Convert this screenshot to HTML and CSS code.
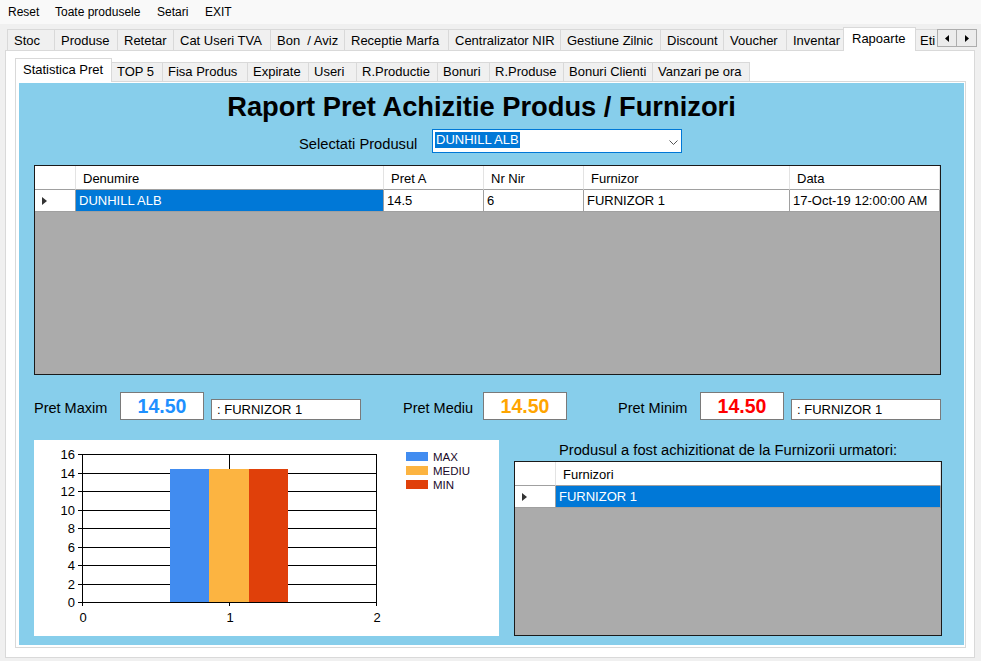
FILE: index.html
```html
<!DOCTYPE html>
<html>
<head>
<meta charset="utf-8">
<title>Rapoarte</title>
<link rel="stylesheet" href="styles.css">
</head>
<body>
<div class="menubar">
  <span class="mi mi-reset">Reset</span>
  <span class="mi mi-toate">Toate produsele</span>
  <span class="mi mi-setari">Setari</span>
  <span class="mi">EXIT</span>
</div>

<div class="tabrow outer-row">
  <div class="tablist outer-list">
    <div class="tab">Stoc</div>
    <div class="tab">Produse</div>
    <div class="tab">Retetar</div>
    <div class="tab">Cat Useri TVA</div>
    <div class="tab">Bon&nbsp; / Aviz</div>
    <div class="tab">Receptie Marfa</div>
    <div class="tab">Centralizator NIR</div>
    <div class="tab">Gestiune Zilnic</div>
    <div class="tab">Discount</div>
    <div class="tab">Voucher</div>
    <div class="tab">Inventar</div>
    <div class="tab sel">Rapoarte</div>
    <div class="tab">Eti</div>
  </div>
  <div class="scrollbtns">
    <div class="sbtn"><svg width="4" height="7" viewBox="0 0 4 7"><path d="M4 0L0 3.5L4 7Z" fill="#000"/></svg></div>
    <div class="sbtn"><svg width="4" height="7" viewBox="0 0 4 7"><path d="M0 0L4 3.5L0 7Z" fill="#000"/></svg></div>
  </div>
</div>

<div class="outer-page">
  <div class="tabrow inner-row">
    <div class="tablist inner-list">
      <div class="tab sel">Statistica Pret</div>
      <div class="tab">TOP 5</div>
      <div class="tab">Fisa Produs</div>
      <div class="tab">Expirate</div>
      <div class="tab">Useri</div>
      <div class="tab">R.Productie</div>
      <div class="tab">Bonuri</div>
      <div class="tab">R.Produse</div>
      <div class="tab">Bonuri Clienti</div>
      <div class="tab">Vanzari pe ora</div>
    </div>
  </div>

  <div class="inner-page">
    <div class="panel">
      <h1 class="title">Raport Pret Achizitie Produs / Furnizori</h1>

      <div class="select-row">
        <span class="select-label">Selectati Produsul</span>
        <div class="combo">
          <span class="combo-text">DUNHILL ALB</span>
          <svg class="chev" width="9" height="5" viewBox="0 0 9 5"><polyline points="0.5,0.5 4.5,4.5 8.5,0.5" fill="none" stroke="#555" stroke-width="1"/></svg>
        </div>
      </div>

      <div class="grid grid-main">
        <div class="grow ghead">
          <div class="gc"></div>
          <div class="gc">Denumire</div>
          <div class="gc">Pret A</div>
          <div class="gc">Nr Nir</div>
          <div class="gc">Furnizor</div>
          <div class="gc">Data</div>
        </div>
        <div class="grow gdata">
          <div class="gc rowhead"><svg width="5" height="8" viewBox="0 0 5 8"><path d="M0 0L5 4L0 8Z" fill="#333"/></svg></div>
          <div class="gc selcell">DUNHILL ALB</div>
          <div class="gc">14.5</div>
          <div class="gc">6</div>
          <div class="gc">FURNIZOR 1</div>
          <div class="gc">17-Oct-19 12:00:00 AM</div>
        </div>
      </div>

      <div class="stats">
        <span class="slabel sl1">Pret Maxim</span>
        <div class="sbox sb-max">14.50</div>
        <div class="stb">: FURNIZOR 1</div>
        <span class="slabel sl2">Pret Mediu</span>
        <div class="sbox sb-med">14.50</div>
        <span class="slabel sl3">Pret Minim</span>
        <div class="sbox sb-min">14.50</div>
        <div class="stb">: FURNIZOR 1</div>
      </div>

      <div class="bottom">
        <div class="chart">
          <svg width="465" height="196" viewBox="0 0 465 196" shape-rendering="crispEdges">
            <g stroke="#000" stroke-width="1">
              <line x1="44" y1="162.5" x2="342.5" y2="162.5"/>
              <line x1="44" y1="144.5" x2="342.5" y2="144.5"/>
              <line x1="44" y1="125.5" x2="342.5" y2="125.5"/>
              <line x1="44" y1="107.5" x2="342.5" y2="107.5"/>
              <line x1="44" y1="88.5" x2="342.5" y2="88.5"/>
              <line x1="44" y1="70.5" x2="342.5" y2="70.5"/>
              <line x1="44" y1="51.5" x2="342.5" y2="51.5"/>
              <line x1="44" y1="33.5" x2="342.5" y2="33.5"/>
              <line x1="44" y1="14.5" x2="342.5" y2="14.5"/>
              <line x1="48.5" y1="14.5" x2="48.5" y2="166"/>
              <line x1="195.5" y1="14.5" x2="195.5" y2="166"/>
              <line x1="342.5" y1="14.5" x2="342.5" y2="166"/>
            </g>
            <rect x="136" y="28.5" width="39" height="133.5" fill="#418cf0"/>
            <rect x="175" y="28.5" width="40" height="133.5" fill="#fcb441"/>
            <rect x="215" y="28.5" width="39" height="133.5" fill="#e0400a"/>
            <g class="axis-text" text-anchor="end">
              <text x="41" y="167">0</text>
              <text x="41" y="149">2</text>
              <text x="41" y="130">4</text>
              <text x="41" y="112">6</text>
              <text x="41" y="93">8</text>
              <text x="41" y="75">10</text>
              <text x="41" y="56">12</text>
              <text x="41" y="38">14</text>
              <text x="41" y="19">16</text>
            </g>
            <g class="axis-text" text-anchor="middle">
              <text x="49" y="182">0</text>
              <text x="196" y="182">1</text>
              <text x="343" y="182">2</text>
            </g>
            <rect x="372" y="12" width="22" height="9" fill="#418cf0"/>
            <rect x="372" y="26" width="22" height="9" fill="#fcb441"/>
            <rect x="372" y="40" width="22" height="9" fill="#e0400a"/>
            <g class="legend-text">
              <text x="399" y="21">MAX</text>
              <text x="399" y="35">MEDIU</text>
              <text x="399" y="49">MIN</text>
            </g>
          </svg>
        </div>

        <div class="suppliers">
          <div class="sup-label">Produsul a fost achizitionat de la Furnizorii urmatori:</div>
          <div class="grid grid-sup">
            <div class="grow ghead">
              <div class="gc"></div>
              <div class="gc">Furnizori</div>
            </div>
            <div class="grow gdata">
              <div class="gc rowhead"><svg width="5" height="8" viewBox="0 0 5 8"><path d="M0 0L5 4L0 8Z" fill="#333"/></svg></div>
              <div class="gc selcell">FURNIZOR 1</div>
            </div>
          </div>
        </div>
      </div>
    </div>
  </div>
</div>
</body>
</html>
```

FILE: styles.css
```css
* { box-sizing: border-box; }
html, body { margin: 0; padding: 0; }
body {
  width: 981px;
  height: 661px;
  overflow: hidden;
  background: #f0f0f0;
  font-family: "Liberation Sans", Arial, sans-serif;
  font-size: 13px;
  color: #000;
}

/* menu */
.menubar {
  height: 24px;
  background: #f9f9f9;
  display: flex;
  padding-left: 8px;
  font-size: 12px;
  line-height: 24px;
}
.mi-reset { width: 47px; }
.mi-toate { width: 102px; }
.mi-setari { width: 48px; }

/* tabs */
.tabrow {
  display: flex;
  align-items: flex-end;
  height: 24px;
  position: relative;
  z-index: 1;
  margin-bottom: -1px;
}
.outer-row { margin-top: 3px; padding-left: 7px; margin-right: 4px; }
.tablist { display: flex; align-items: flex-end; height: 24px; overflow: hidden; }
.outer-list { width: 930px; flex: none; }
.tab {
  flex: none;
  border: 1px solid #d9d9d9;
  border-right: 0;
  border-bottom: 0;
  background: #f0f0f0;
  white-space: nowrap;
  overflow: hidden;
}
.tab.sel { background: #fff; border-right: 1px solid #d9d9d9; }
.tab.sel + .tab { border-left: 0; }
.tab:last-child { border-right: 1px solid #d9d9d9; }

.outer-list .tab { height: 21px; margin-bottom: 1px; padding: 2px 0 0 6px; line-height: 18px; }
.outer-list .tab.sel { height: 24px; margin-bottom: 0; padding-left: 8px; }
.outer-list .tab:last-child { border-right: 0; }
.outer-list .tab:nth-child(1) { width: 47px; }
.outer-list .tab:nth-child(2) { width: 63px; }
.outer-list .tab:nth-child(3) { width: 56px; }
.outer-list .tab:nth-child(4) { width: 97px; }
.outer-list .tab:nth-child(5) { width: 74px; }
.outer-list .tab:nth-child(6) { width: 104px; }
.outer-list .tab:nth-child(7) { width: 112px; }
.outer-list .tab:nth-child(8) { width: 100px; }
.outer-list .tab:nth-child(9) { width: 63px; }
.outer-list .tab:nth-child(10) { width: 63px; }
.outer-list .tab:nth-child(11) { width: 57px; }
.outer-list .tab:nth-child(12) { width: 73px; }
.outer-list .tab:nth-child(13) { width: 21px; padding-left: 4px; }

.scrollbtns { display: flex; align-self: flex-start; margin-top: 2px; }
.sbtn {
  width: 20px;
  height: 18px;
  border: 1px solid #adadad;
  background: #ececec;
  display: flex;
  align-items: center;
  justify-content: center;
}
.sbtn + .sbtn { border-left: 0; }

.inner-list .tab { height: 19px; margin-bottom: 1px; padding: 0 0 0 5px; line-height: 17px; }
.inner-list .tab.sel { height: 24px; margin-bottom: 0; padding: 2px 0 0 7px; }
.inner-list .tab:nth-child(1) { width: 97px; }
.inner-list .tab:nth-child(2) { width: 50px; }
.inner-list .tab:nth-child(3) { width: 85px; }
.inner-list .tab:nth-child(4) { width: 61px; }
.inner-list .tab:nth-child(5) { width: 48px; }
.inner-list .tab:nth-child(6) { width: 81px; }
.inner-list .tab:nth-child(7) { width: 52px; }
.inner-list .tab:nth-child(8) { width: 74px; }
.inner-list .tab:nth-child(9) { width: 89px; }
.inner-list .tab:nth-child(10) { width: 98px; }

/* pages */
.outer-page {
  margin: 0 6px 0 5px;
  height: 608px;
  border: 1px solid #d9d9d9;
  background: #fff;
  padding: 7px 8px 9px 9px;
  display: flex;
  flex-direction: column;
}
.inner-page {
  height: 567px;
  border: 1px solid #d9d9d9;
  background: #fff;
  padding: 1px 1px 2px 3px;
}
.panel {
  width: 945px;
  height: 562px;
  background: #87ceeb;
  padding-left: 15px;
  display: flex;
  flex-direction: column;
}

/* title and selector */
.title {
  margin: 8px 0 0;
  font-size: 27.3px;
  font-weight: bold;
  line-height: 31px;
  text-align: center;
  padding-right: 35px;
}
.select-row {
  display: flex;
  align-items: flex-start;
  margin-top: 7px;
  height: 24px;
  padding-left: 265px;
}
.select-label { font-size: 14.7px; line-height: 16px; margin-top: 7px; width: 133px; white-space: nowrap; }
.combo {
  width: 250px;
  height: 24px;
  border: 1px solid #0078d7;
  background: #fff;
  display: flex;
  align-items: flex-start;
  justify-content: space-between;
  padding: 2px 3px 0 2px;
}
.combo-text { background: #0078d7; color: #fff; line-height: 16px; padding: 0 1px; }
.chev { margin-top: 8px; }

/* data grids */
.grid { border: 1px solid #1a1a1a; background: #ababab; }
.grid-main { width: 907px; height: 210px; margin-top: 12px; }
.grid-sup { height: 175px; margin-top: 3px; }
.grow { display: grid; background: #fff; }
.grid-main .grow { grid-template-columns: 41px 308px 100px 100px 206px 150px; }
.grid-sup .grow { grid-template-columns: 41px 385px; }
.gc { white-space: nowrap; overflow: hidden; }
.ghead .gc {
  height: 24px;
  border-right: 1px solid #e3e3e3;
  border-bottom: 1px solid #a0a0a0;
  padding: 2px 0 0 7px;
  line-height: 22px;
}
.gdata .gc {
  height: 22px;
  border-right: 1px solid #a0a0a0;
  border-bottom: 1px solid #a0a0a0;
  padding-left: 3px;
  line-height: 21px;
}
.gdata .rowhead { display: flex; align-items: center; padding-left: 7px; }
.gdata .selcell { background: #0078d7; color: #fff; }

/* stats */
.stats { display: flex; align-items: flex-start; height: 28px; margin-top: 17px; }
.slabel { font-size: 14.5px; line-height: 17px; margin-top: 8px; white-space: nowrap; }
.sl1 { width: 86px; }
.sl2 { width: 80px; margin-left: 42px; }
.sl3 { width: 82px; margin-left: 51px; }
.sbox {
  width: 84px;
  height: 28px;
  border: 1px solid #7a7a7a;
  background: #fff;
  font-weight: bold;
  font-size: 19.5px;
  line-height: 26px;
  text-align: center;
}
.sb-max { color: #1e90ff; }
.sb-med { color: #ffa500; }
.sb-min { color: #ff0000; }
.stb {
  width: 150px;
  height: 21px;
  margin: 7px 0 0 7px;
  border: 1px solid #7a7a7a;
  background: #fff;
  padding-left: 5px;
  line-height: 19px;
}

/* bottom */
.bottom { display: flex; margin-top: 20px; }
.chart { width: 465px; height: 196px; background: #fff; }
.chart svg { display: block; }
.axis-text { font-family: "Liberation Sans", Arial, sans-serif; font-size: 13px; fill: #000; }
.legend-text { font-family: "Liberation Sans", Arial, sans-serif; font-size: 11.5px; fill: #1a0a2a; }
.suppliers { width: 428px; margin-left: 15px; }
.sup-label { font-size: 14.7px; line-height: 16px; padding-top: 2px; text-align: center; white-space: nowrap; }
```
